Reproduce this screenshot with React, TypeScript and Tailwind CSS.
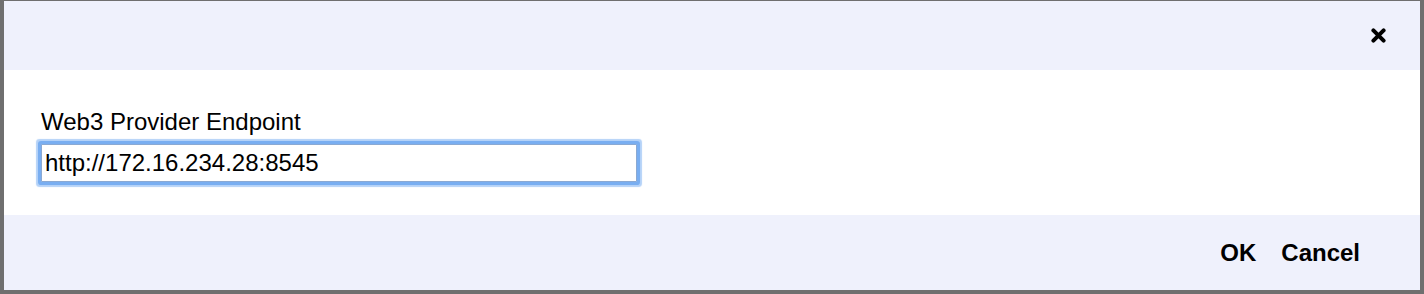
export default function App() {
  return (
    <div className="w-[1424px] h-[294px] bg-[#6f6f6f] pl-[4px] pt-[1px] pr-[4px] pb-[4px] font-['Liberation_Sans',Arial,sans-serif] text-black">
      <div className="flex h-full flex-col bg-white">
        <div className="flex h-[69px] items-center justify-end bg-[#eff1fc] pr-[34px]">
          <button className="flex h-[15px] w-[15px] items-center justify-center" aria-label="Close">
            <svg viewBox="0 0 15 15" width="15" height="15">
              <path d="M2.4 2.4L12.6 12.6M12.6 2.4L2.4 12.6" stroke="#000" strokeWidth="4" strokeLinecap="round" />
            </svg>
          </button>
        </div>
        <div className="flex h-[145px] flex-col pl-[37px] pt-[38px]">
          <label className="text-[24px] leading-[28px]">Web3 Provider Endpoint</label>
          <input
            className="mt-[8px] h-[38px] w-[596px] rounded-[1px] border border-[#8aa9d3] bg-white px-[3px] text-[24px] outline-none shadow-[0_0_0_3px_#79aef1,0_0_1px_5px_#b4d2f8]"
            defaultValue="http://172.16.234.28:8545"
          />
        </div>
        <div className="flex flex-1 items-center justify-end gap-[25px] bg-[#eff1fc] pr-[60px]">
          <button className="text-[24px] font-bold leading-[28px]">OK</button>
          <button className="text-[24px] font-bold leading-[28px]">Cancel</button>
        </div>
      </div>
    </div>
  );
}
